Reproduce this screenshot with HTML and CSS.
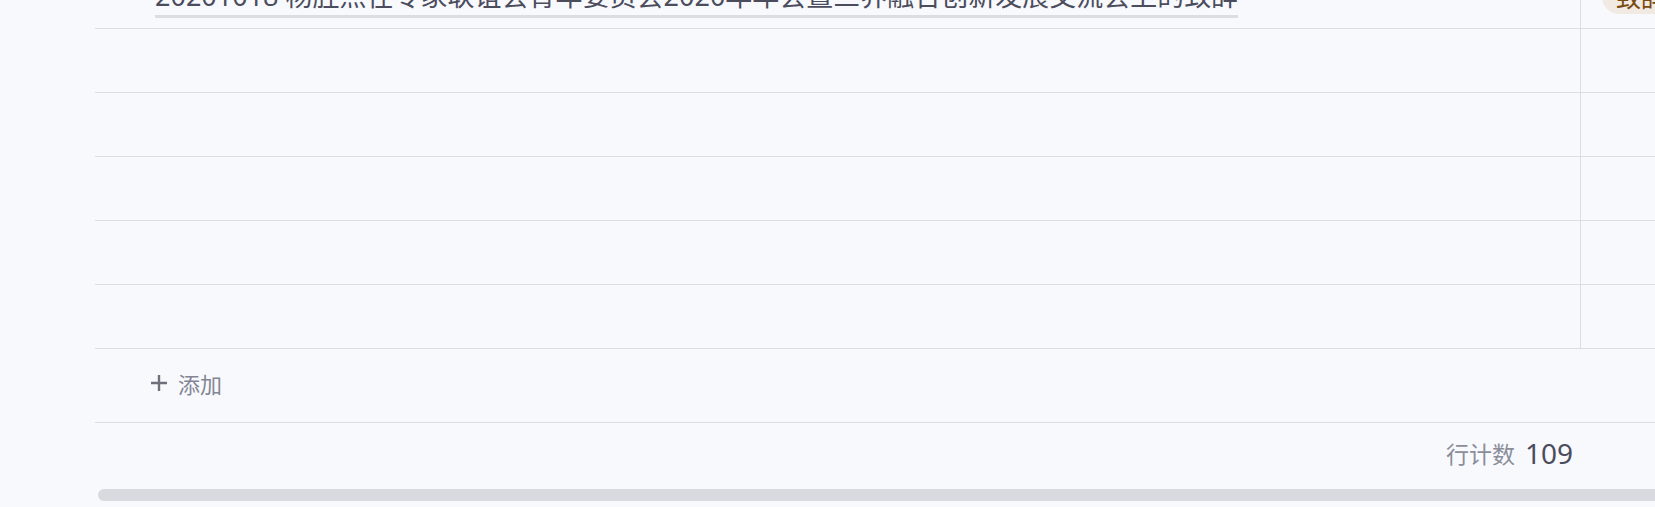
FILE: index.html
```html
<!DOCTYPE html>
<html>
<head>
    <title>Table</title>
    <meta content="text/html;charset=utf-8" http-equiv="Content-Type">
    <link rel="stylesheet" href="styles.css">
</head>
<body>
<div class="sheet">
    <div class="rows">
        <div class="row first">
            <div class="cell title-cell">
                <a class="doc-link">20201018 杨胜点在专家联谊会青年委员会2020年年会暨三界融合创新发展交流会上的致辞</a>
            </div>
            <div class="cell tag-cell">
                <span class="tag">致辞</span>
            </div>
        </div>
        <div class="row"><div class="cell"></div><div class="cell tag-cell"></div></div>
        <div class="row"><div class="cell"></div><div class="cell tag-cell"></div></div>
        <div class="row"><div class="cell"></div><div class="cell tag-cell"></div></div>
        <div class="row"><div class="cell"></div><div class="cell tag-cell"></div></div>
        <div class="row"><div class="cell"></div><div class="cell tag-cell"></div></div>
    </div>
    <div class="add-row">
        <svg class="plus" width="18" height="18" viewBox="0 0 18 18">
            <path d="M9 1v16M1 9h16" stroke="#6e707c" stroke-width="2.4" fill="none"/>
        </svg>
        <span>添加</span>
    </div>
    <div class="footer">
        <span class="count-label">行计数</span>
        <span class="count">109</span>
    </div>
    <div class="scrollbar"></div>
</div>
</body>
</html>
```

FILE: styles.css
```css
html, body {
    margin: 0;
    height: 507px;
    overflow: hidden;
    background: #f8f9fd;
    font-family: "Noto Sans", "Noto Sans CJK SC", sans-serif;
}

.sheet {
    padding-left: 95px;
    height: 507px;
    overflow: hidden;
}

.rows {
    margin-top: -35px;
}

.row {
    display: grid;
    grid-template-columns: 1485px 1fr;
    height: 63px;
    border-bottom: 1px solid #dcdde3;
}

.cell {
    overflow: hidden;
    display: flex;
    align-items: flex-end;
}

.title-cell {
    padding-left: 60px;
    padding-bottom: 10px;
}

.doc-link {
    display: inline-block;
    font-size: 27px;
    line-height: 38px;
    color: #4b4c5c;
    white-space: nowrap;
    border-bottom: 3px solid #dcdde3;
}

.tag-cell {
    border-left: 1px solid #dcdde3;
    padding-left: 21px;
    padding-bottom: 14px;
}

.tag {
    display: inline-block;
    white-space: nowrap;
    font-size: 25px;
    line-height: 34px;
    padding: 0 14px;
    border-radius: 17px;
    background: #f1eae2;
    color: #7a4a12;
}

.add-row {
    display: flex;
    align-items: center;
    gap: 10px;
    height: 67px;
    padding-bottom: 6px;
    padding-left: 55px;
    border-bottom: 1px solid #dcdde3;
    font-size: 22px;
    color: #838594;
}

.footer {
    display: flex;
    justify-content: flex-end;
    align-items: center;
    gap: 10px;
    height: 59px;
    padding-bottom: 7px;
    padding-right: 82px;
}

.count-label {
    font-size: 23px;
    color: #8b8d9a;
}

.count {
    font-size: 28px;
    color: #4b4c5c;
}

.scrollbar {
    height: 12px;
    margin-left: 3px;
    margin-right: -30px;
    border-radius: 6px;
    background: #d9dadf;
}
```
